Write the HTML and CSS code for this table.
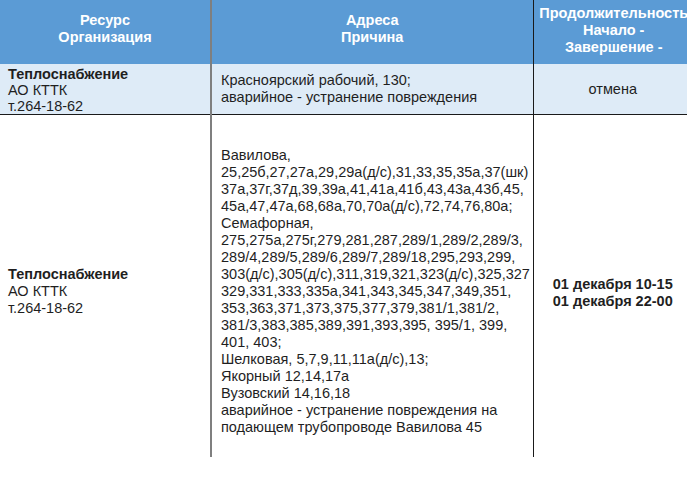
FILE: index.html
```html
<!DOCTYPE html>
<html lang="ru">
<head>
<meta charset="utf-8">
<link rel="stylesheet" href="styles.css">
</head>
<body>
<table class="sched">
  <colgroup>
    <col class="c-res">
    <col class="c-addr">
    <col class="c-dur">
  </colgroup>
  <thead>
    <tr class="head">
      <th class="cell-res">Ресурс<br>Организация</th>
      <th class="cell-addr">Адреса<br>Причина</th>
      <th class="cell-dur">Продолжительность<br>Начало -<br>Завершение -</th>
    </tr>
  </thead>
  <tbody>
    <tr class="row row-alt">
      <td class="cell-res"><b>Теплоснабжение</b><br>АО КТТК<br>т.264-18-62</td>
      <td class="cell-addr">Красноярский рабочий, 130;<br>аварийное - устранение повреждения</td>
      <td class="cell-dur center">отмена</td>
    </tr>
    <tr class="row row-tall">
      <td class="cell-res"><b>Теплоснабжение</b><br>АО КТТК<br>т.264-18-62</td>
      <td class="cell-addr">Вавилова,<br>25,25б,27,27а,29,29а(д/с),31,33,35,35а,37(шк)<br>37а,37г,37д,39,39а,41,41а,41б,43,43а,43б,45,<br>45а,47,47а,68,68а,70,70а(д/с),72,74,76,80а;<br>Семафорная,<br>275,275а,275г,279,281,287,289/1,289/2,289/3,<br>289/4,289/5,289/6,289/7,289/18,295,293,299,<br>303(д/с),305(д/с),311,319,321,323(д/с),325,327<br>329,331,333,335а,341,343,345,347,349,351,<br>353,363,371,373,375,377,379,381/1,381/2,<br>381/3,383,385,389,391,393,395, 395/1, 399,<br>401, 403;<br>Шелковая, 5,7,9,11,11а(д/с),13;<br>Якорный 12,14,17а<br>Вузовский 14,16,18<br>аварийное - устранение повреждения на<br>подающем трубопроводе Вавилова 45</td>
      <td class="cell-dur center bold">01 декабря 10-15<br>01 декабря 22-00</td>
    </tr>
  </tbody>
</table>
</body>
</html>
```

FILE: styles.css
```css
html, body {
  margin: 0;
  padding: 0;
  overflow: hidden;
  background: #ffffff;
}

body {
  font-family: "Liberation Sans", Arial, sans-serif;
  font-size: 14.5px;
  line-height: 17px;
  color: #1f1f1f;
}

.sched {
  border-collapse: collapse;
  table-layout: fixed;
  width: 692px;
}

.c-res { width: 211px; }
.c-addr { width: 322px; }
.c-dur { width: 159px; }

.head th {
  background: #5b9bd5;
  color: #ffffff;
  font-weight: bold;
  text-align: center;
  vertical-align: middle;
  height: 64px;
  padding: 0 0 6px 0;
  box-sizing: border-box;
  line-height: 17px;
}

.head .cell-dur {
  white-space: nowrap;
  padding: 0 0 4px 2px;
}

td {
  vertical-align: middle;
  padding: 0;
}

.cell-res {
  border-right: 2px solid #7f7f7f;
  padding-left: 8px;
}

.head .cell-res {
  padding-left: 0;
}

.cell-addr {
  border-right: 1px solid #1a1a1a;
  padding-left: 9px;
}

.head .cell-addr {
  padding-left: 0;
}

.row-alt {
  background: #deebf7;
  border-bottom: 1px solid #1a1a1a;
}

.row-alt td {
  height: 50px;
  box-sizing: border-box;
}

.row-alt .cell-res {
  line-height: 16px;
  padding-top: 2px;
}

.row-tall td {
  height: 342px;
  box-sizing: border-box;
}

.row-tall .cell-addr {
  padding-top: 12px;
}

.row-tall .cell-res {
  padding-top: 11px;
}

.center {
  text-align: center;
}

.bold {
  font-weight: bold;
  padding-left: 0;
}

.row-tall .bold {
  padding-top: 14px;
}
```
